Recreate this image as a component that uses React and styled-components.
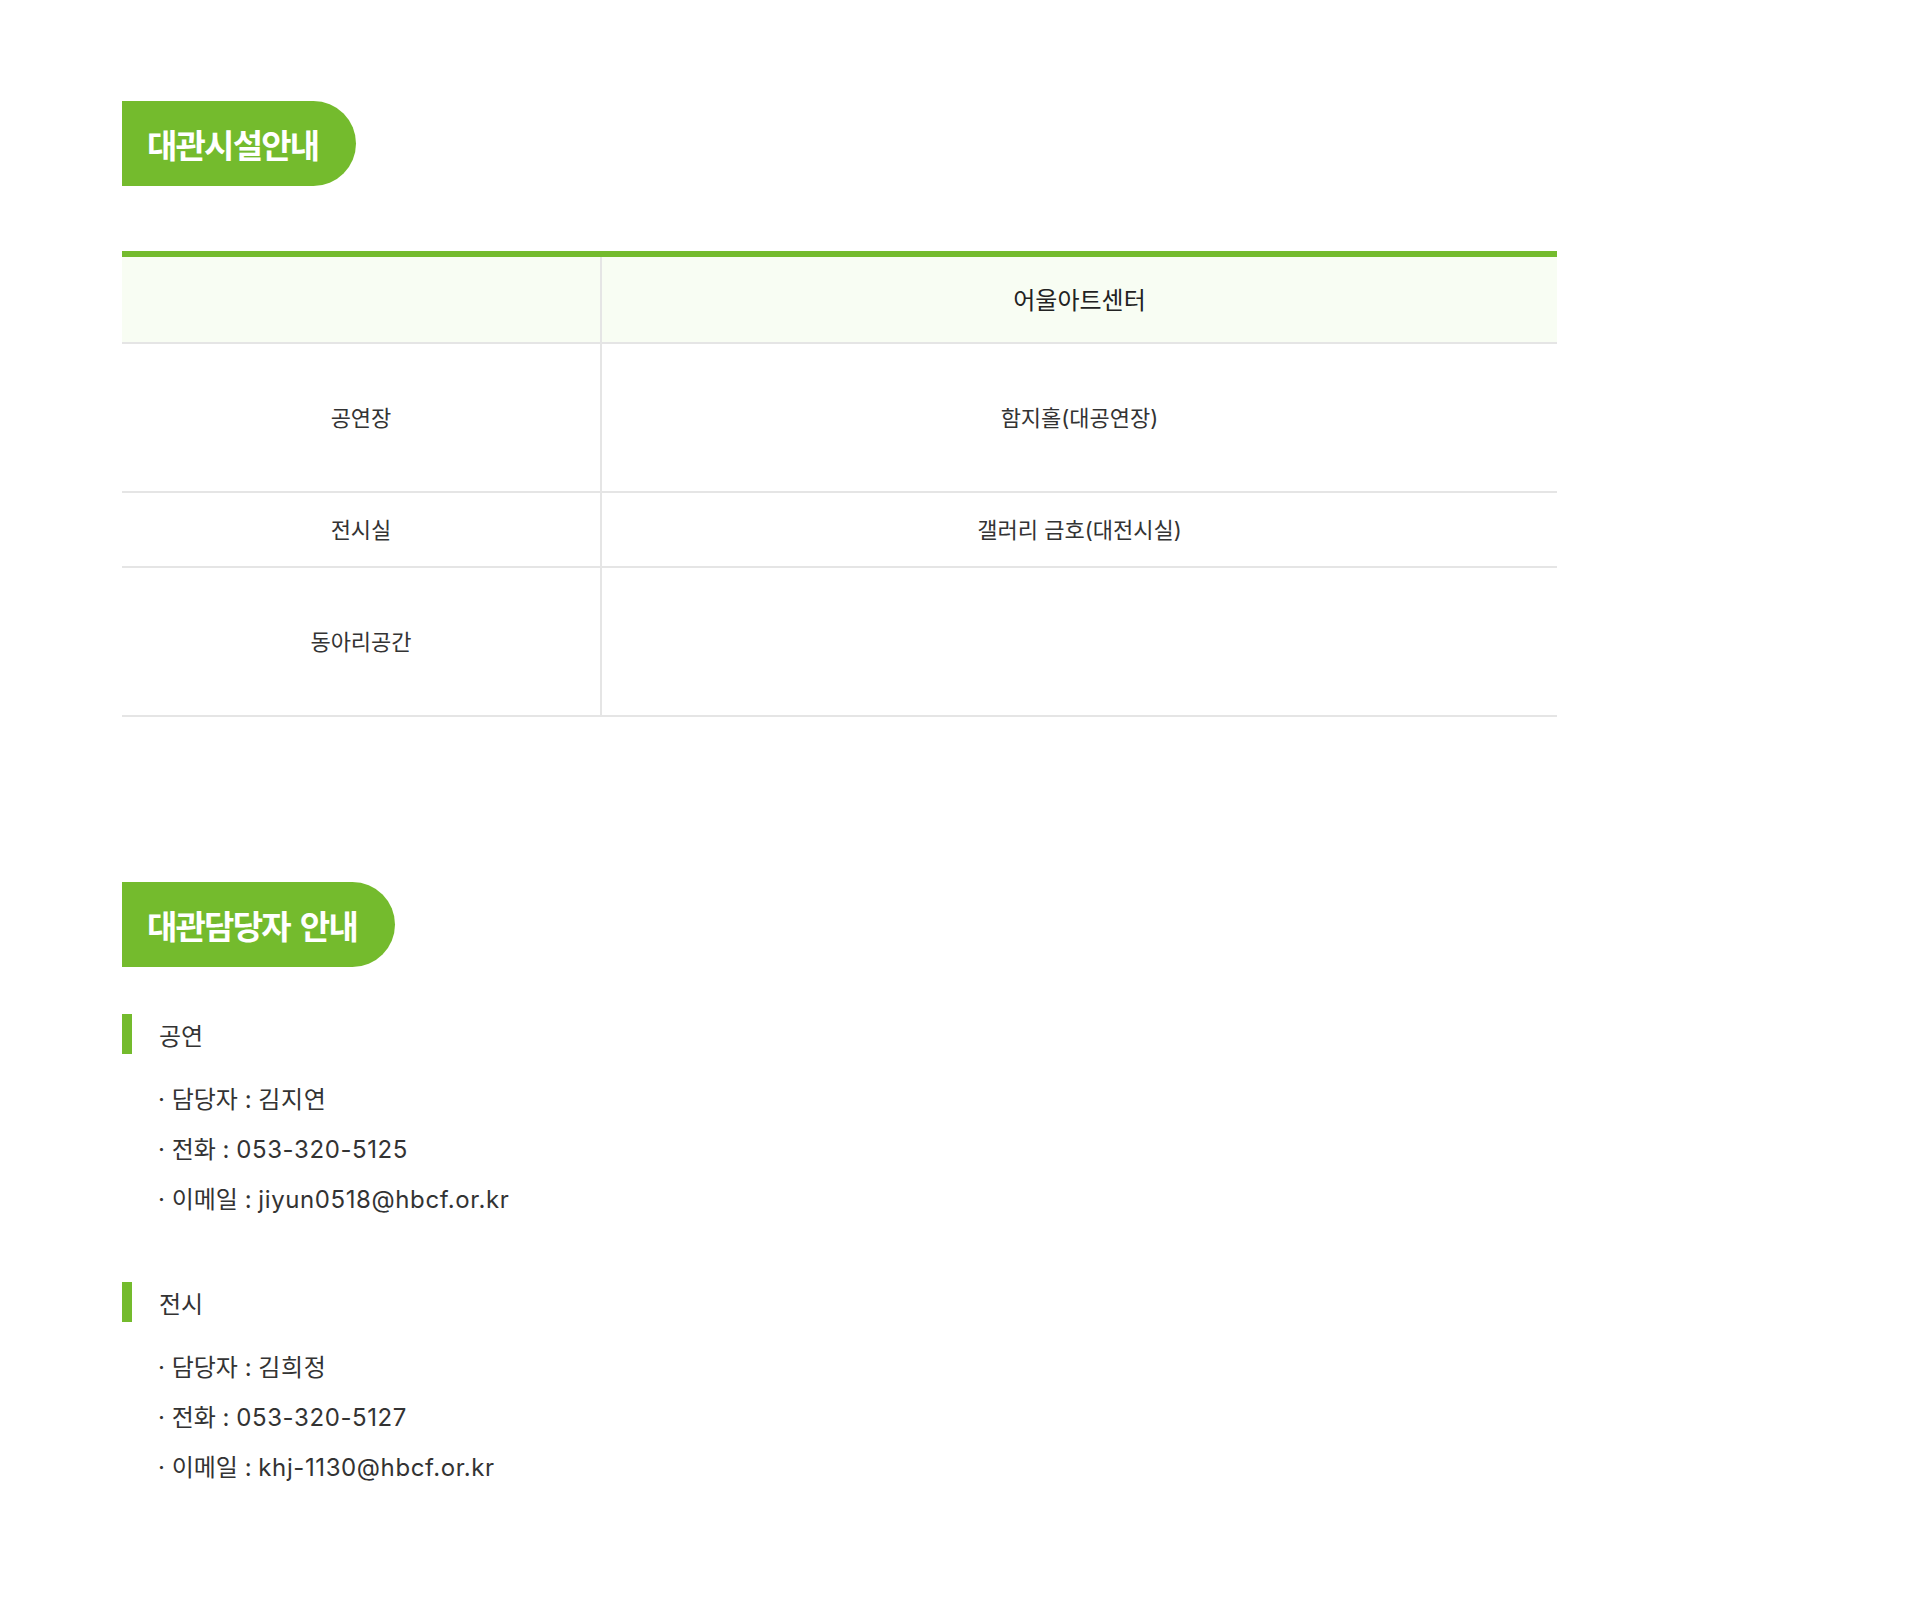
import React from "react";
import styled, { createGlobalStyle } from "styled-components";

const GREEN = "#74bb2d";

const GlobalStyle = createGlobalStyle`
  html, body {
    margin: 0;
    padding: 0;
    background: #ffffff;
  }
  body {
    font-family: Inter, "Noto Sans CJK KR", "Noto Sans", sans-serif;
    color: #333333;
  }
  * { box-sizing: border-box; }
`;

const Page = styled.main`
  padding: 101px 0 120px 122px;
  width: 1920px;
`;

const Section = styled.section`
  display: flex;
  flex-direction: column;
  align-items: flex-start;
  margin-bottom: ${(p) => p.$gapAfter || 0}px;
`;

const Pill = styled.h2`
  margin: 0;
  display: inline-flex;
  align-items: center;
  height: 85px;
  padding: 0 38px 0 25px;
  background: ${GREEN};
  color: #ffffff;
  font-size: 33px;
  font-weight: 700;
  letter-spacing: -1.8px;
  word-spacing: 4px;
  border-radius: 0 43px 43px 0;
`;

const Grid = styled.div`
  margin-top: 65px;
  width: 1435px;
  display: grid;
  grid-template-columns: 480px 1fr;
  border-top: 6px solid ${GREEN};
`;

const Cell = styled.div`
  display: flex;
  align-items: center;
  justify-content: center;
  height: ${(p) => p.$h}px;
  padding-bottom: 3px;
  border-bottom: 2px solid #e5e5e5;
  border-right: ${(p) => (p.$first ? "2px solid #e5e5e5" : "none")};
  background: ${(p) => (p.$head ? "#f8fdf3" : "#ffffff")};
  color: ${(p) => (p.$head ? "#222222" : "#333333")};
  font-size: ${(p) => (p.$head ? 24 : 22)}px;
  font-weight: 400;
`;

const Group = styled.div`
  margin-top: ${(p) => p.$top}px;
  display: flex;
  flex-direction: column;
`;

const SubTitle = styled.h3`
  margin: 0;
  display: flex;
  align-items: center;
  height: 40px;
  border-left: 10px solid ${GREEN};
  padding-left: 27px;
  font-size: 24px;
  font-weight: 400;
  color: #333333;
`;

const List = styled.ul`
  list-style: none;
  margin: 21px 0 0;
  padding: 0 0 0 36px;
`;

const Item = styled.li`
  height: 50px;
  line-height: 50px;
  font-size: 24px;
  color: #333333;
`;

const Value = styled.span`
  letter-spacing: 0.6px;
`;

const rows = [
  { h: 149, a: "공연장", b: "함지홀(대공연장)" },
  { h: 75, a: "전시실", b: "갤러리 금호(대전시실)" },
  { h: 149, a: "동아리공간", b: "" },
];

const contacts = [
  {
    title: "공연",
    top: 47,
    items: [
      ["담당자", "김지연"],
      ["전화", "053-320-5125"],
      ["이메일", "jiyun0518@hbcf.or.kr"],
    ],
  },
  {
    title: "전시",
    top: 57,
    items: [
      ["담당자", "김희정"],
      ["전화", "053-320-5127"],
      ["이메일", "khj-1130@hbcf.or.kr"],
    ],
  },
];

export default function App() {
  return (
    <>
      <GlobalStyle />
      <Page>
        <Section $gapAfter={165}>
          <Pill>대관시설안내</Pill>
          <Grid>
            <Cell $h={87} $head $first />
            <Cell $h={87} $head>어울아트센터</Cell>
            {rows.map((r) => (
              <React.Fragment key={r.a}>
                <Cell $h={r.h} $first>{r.a}</Cell>
                <Cell $h={r.h}>{r.b}</Cell>
              </React.Fragment>
            ))}
          </Grid>
        </Section>
        <Section>
          <Pill>대관담당자 안내</Pill>
          {contacts.map((c) => (
            <Group key={c.title} $top={c.top}>
              <SubTitle>{c.title}</SubTitle>
              <List>
                {c.items.map(([label, value]) => (
                  <Item key={label}>
                    {"· " + label + " : "}
                    <Value>{value}</Value>
                  </Item>
                ))}
              </List>
            </Group>
          ))}
        </Section>
      </Page>
    </>
  );
}
